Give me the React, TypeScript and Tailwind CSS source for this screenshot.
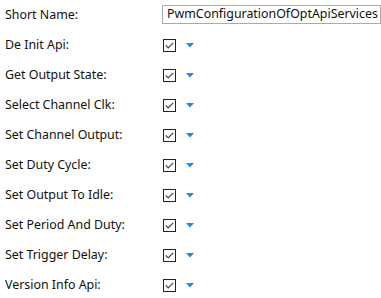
import React from 'react';

const ROWS = [
  'De Init Api:',
  'Get Output State:',
  'Select Channel Clk:',
  'Set Channel Output:',
  'Set Duty Cycle:',
  'Set Output To Idle:',
  'Set Period And Duty:',
  'Set Trigger Delay:',
  'Version Info Api:',
];

const FONT = "font-['Noto_Sans',sans-serif]";

function CheckBox() {
  return (
    <svg width="13" height="13" viewBox="0 0 13 13" className="block">
      <rect x="0.5" y="0.5" width="12" height="12" fill="#fff" stroke="#222" />
      <path d="M2.8 6.4 L5.2 8.8 L10.2 3.8" fill="none" stroke="#444" strokeWidth="1.2" />
    </svg>
  );
}

function Caret() {
  return (
    <svg width="8" height="5" viewBox="0 0 8 5" className="block">
      <path d="M0 0 H8 L4 4.5 Z" fill="#1a8ae6" />
    </svg>
  );
}

export default function App() {
  return (
    <div className={`w-[381px] h-[298px] bg-white text-[12.4px] text-[#111] overflow-hidden ${FONT}`}>
      <div className="flex items-center h-[30px]">
        <span className="w-[162px] pl-[5px] shrink-0">Short Name:</span>
        <div className="w-[219px] h-[19px] mt-[-2px] border border-[#aaa] flex items-center pl-[4px] whitespace-nowrap overflow-hidden">
          PwmConfigurationOfOptApiServices
        </div>
      </div>
      {ROWS.map(label => (
        <div key={label} className="flex items-center h-[30px]">
          <span className="w-[163px] pl-[5px] shrink-0">{label}</span>
          <CheckBox />
          <span className="ml-[10px]">
            <Caret />
          </span>
        </div>
      ))}
    </div>
  );
}
